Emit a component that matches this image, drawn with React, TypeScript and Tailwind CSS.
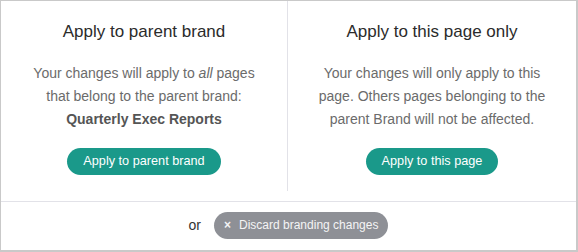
export default function App() {
  return (
    <div className="w-[578px] h-[252px] bg-white" style={{ fontFamily: '"Liberation Sans", Arial, sans-serif' }}>
      <div className="w-[578px] h-[252px] border-l border-t border-r-2 border-b-2 border-[#c9c9c9] flex flex-col">
        <div className="h-[201px] flex border-b border-[#e2e2e8]">
          <div className="w-[287px] h-[190px] border-r border-[#e2e2e8] flex flex-col items-center pt-[19px]">
            <h2 className="text-[17px] leading-[24px] text-[#2b2b2b]">Apply to parent brand</h2>
            <p className="mt-[18px] text-[14px] leading-[23px] text-[#6b6b6b] text-center">
              Your changes will apply to <em>all</em> pages
              <br />
              that belong to the parent brand:
              <br />
              <span className="font-bold text-[#555555]">Quarterly Exec Reports</span>
            </p>
            <button className="mt-[17px] h-[27px] px-4 rounded-full bg-[#1a998a] text-white text-[12.7px] leading-[27px]">
              Apply to parent brand
            </button>
          </div>
          <div className="flex-1 flex flex-col items-center pt-[19px]">
            <h2 className="text-[17px] leading-[24px] text-[#2b2b2b]">Apply to this page only</h2>
            <p className="mt-[18px] text-[14px] leading-[23px] text-[#6b6b6b] text-center">
              Your changes will only apply to this
              <br />
              page. Others pages belonging to the
              <br />
              parent Brand will not be affected.
            </p>
            <button className="mt-[17px] h-[27px] px-4 rounded-full bg-[#1a998a] text-white text-[12.7px] leading-[27px]">
              Apply to this page
            </button>
          </div>
        </div>
        <div className="flex-1 flex items-center justify-center gap-[13px] pb-[1px]">
          <span className="text-[14px] text-[#333333]">or</span>
          <button className="h-[27px] pl-[10px] pr-[10px] rounded-full bg-[#8e9096] text-[#f4f4f5] text-[12px] leading-[27px] flex items-center gap-[8px]">
            <span className="text-[12px] font-bold">×</span>
            <span>Discard branding changes</span>
          </button>
        </div>
      </div>
    </div>
  );
}
